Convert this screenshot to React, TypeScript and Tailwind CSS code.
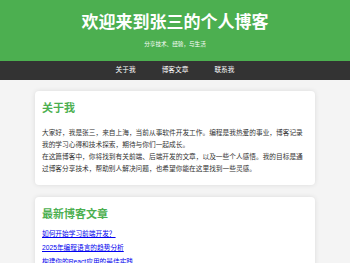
export default function App() {
  const posts = [
    '如何开始学习前端开发？',
    '2025年编程语言的趋势分析',
    '构建你的React应用的最佳实践',
  ];

  return (
    <div className="min-h-[263px] bg-[#f4f4f4] font-['Liberation_Sans','Noto_Sans_CJK_SC',sans-serif] text-[#333]">
      {/* Header */}
      <header className="bg-[#4caf50] pt-[13px] pb-[13px] text-center text-white">
        <h1 className="text-[17px] font-bold leading-[20px]">欢迎来到张三的个人博客</h1>
        <p className="mt-[7px] text-[5.6px] leading-[8px]">分享技术、经验，与生活</p>
      </header>

      {/* Nav */}
      <nav className="flex h-[19px] items-center justify-center bg-[#333] text-[6.7px] text-white">
        <a className="px-[13px]">关于我</a>
        <a className="px-[13px]">博客文章</a>
        <a className="px-[13px]">联系我</a>
      </nav>

      <main className="flex flex-col gap-[12px] pt-[11px]">
        <section className="mx-auto w-[280px] rounded-[4px] bg-white px-[7px] pt-[7px] pb-[10px] shadow-[0_0_5px_rgba(0,0,0,0.1)]">
          <h2 className="mt-[3px] text-[11px] font-bold leading-[14px] text-[#4caf50]">关于我</h2>
          <div className="mt-[12px] text-[6.7px] leading-[12px]">
            <p>大家好，我是张三，来自上海，当前从事软件开发工作。编程是我热爱的事业，博客记录我的学习心得和技术探索，期待与你们一起成长。</p>
            <p>在这篇博客中，你将找到有关前端、后端开发的文章，以及一些个人感悟。我的目标是通过博客分享技术，帮助别人解决问题，也希望你能在这里找到一些灵感。</p>
          </div>
        </section>

        <section className="mx-auto w-[280px] rounded-[4px] bg-white px-[7px] pt-[7px] pb-[10px] shadow-[0_0_5px_rgba(0,0,0,0.1)]">
          <h2 className="mt-[3px] text-[11px] font-bold leading-[14px] text-[#4caf50]">最新博客文章</h2>
          <ul className="mt-[7px] flex flex-col gap-[2px] text-[6.7px] leading-[12px]">
            {posts.map((p) => (
              <li key={p}>
                <a className="text-[#0000ee] underline">{p}</a>
              </li>
            ))}
          </ul>
        </section>
      </main>
    </div>
  );
}
